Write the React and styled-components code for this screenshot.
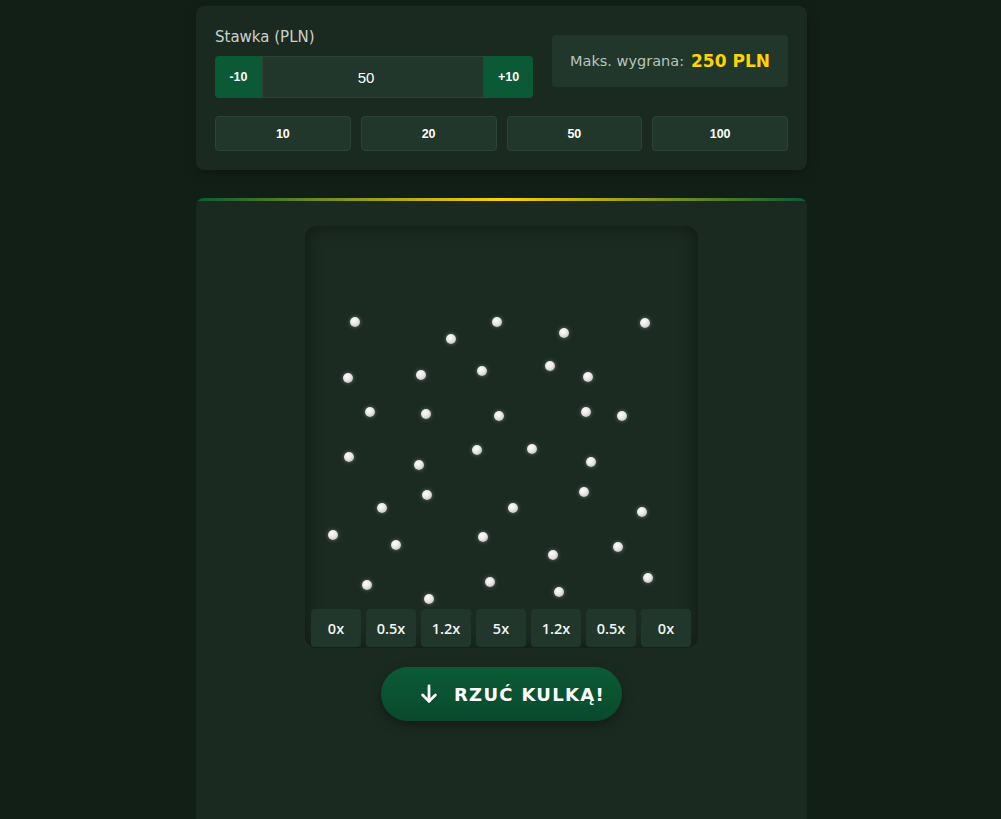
import React, { useState } from 'react';
import styled, { createGlobalStyle } from 'styled-components';

const GlobalStyle = createGlobalStyle`
  body {
    margin: 0;
    background: #121f17;
    font-family: 'DejaVu Sans', 'Open Sans', sans-serif;
    color: #fff;
  }
`;

const Page = styled.div`
  width: 611px;
  margin: 0 auto;
  padding: 6px 0 0 2px;
  display: flex;
  flex-direction: column;
  gap: 28px;
`;

const Panel = styled.section`
  background: #1b2a21;
  border-radius: 8px;
  box-shadow: 0 4px 12px rgba(0, 0, 0, 0.25);
  padding: 21px 19px 19px;
`;

const TopRow = styled.div`
  display: flex;
  align-items: flex-end;
  justify-content: space-between;
`;

const BetGroup = styled.div`
  display: flex;
  flex-direction: column;
  gap: 9px;
`;

const Label = styled.div`
  font-size: 15px;
  color: #c9d1cc;
  line-height: 20px;
`;

const Stepper = styled.div`
  display: flex;
  width: 318px;
  height: 42px;
  border-radius: 4px;
  overflow: hidden;
`;

const StepButton = styled.button`
  width: ${(p) => p.$w}px;
  border: 0;
  background: #0b5a35;
  color: #fff;
  font-family: 'Liberation Sans', Arial, sans-serif;
  font-weight: bold;
  font-size: 12.5px;
  cursor: pointer;
`;

const StakeInput = styled.input`
  flex: 1;
  min-width: 0;
  border: 1px solid #2d4536;
  background: #22372b;
  color: #fff;
  text-align: center;
  padding: 0 14px 0 0;
  font-family: 'Liberation Sans', Arial, sans-serif;
  font-size: 15px;
  outline: none;
`;

const MaxBox = styled.div`
  width: 236px;
  height: 52px;
  margin-bottom: 11px;
  border-radius: 4px;
  background: #22372b;
  display: flex;
  align-items: center;
  justify-content: center;
  gap: 7px;
  font-size: 14.5px;
  color: #b9c4bd;
`;

const MaxValue = styled.span`
  color: #ffd400;
  font-weight: bold;
  font-size: 17px;
`;

const QuickRow = styled.div`
  margin-top: 18px;
  display: grid;
  grid-template-columns: repeat(4, 1fr);
  gap: 10px;
`;

const QuickButton = styled.button`
  height: 35px;
  border: 1px solid #2d4536;
  border-radius: 4px;
  background: #22372b;
  color: #fff;
  font-family: 'Liberation Sans', Arial, sans-serif;
  font-weight: bold;
  font-size: 12.5px;
  cursor: pointer;
`;

const GamePanel = styled.section`
  position: relative;
  background: #1b2a21;
  border-radius: 8px 8px 0 0;
  min-height: 640px;
  padding-top: 28px;
  display: flex;
  flex-direction: column;
  align-items: center;
  gap: 19px;
  overflow: hidden;
  &::before {
    content: '';
    position: absolute;
    top: 0;
    left: 0;
    right: 0;
    height: 3px;
    background: linear-gradient(90deg, #0b5a35, #ffd400 50%, #0b5a35);
  }
`;

const Board = styled.div`
  position: relative;
  width: 393px;
  height: 422px;
  border-radius: 12px;
  background: #1b2b21;
  box-shadow: inset 0 0 18px rgba(0, 0, 0, 0.45);
  display: flex;
  flex-direction: column;
  justify-content: flex-end;
  padding: 0 6px 1px;
  box-sizing: border-box;
`;

const Peg = styled.div`
  position: absolute;
  width: 10px;
  height: 10px;
  margin: -5px 0 0 -5px;
  border-radius: 50%;
  background: radial-gradient(circle at 40% 35%, #ffffff, #e6e6e6 45%, #a9a9a9);
  box-shadow: 0 0 4px rgba(255, 255, 255, 0.35);
`;

const Slots = styled.div`
  display: grid;
  grid-template-columns: repeat(7, 50px);
  gap: 5px;
`;

const Slot = styled.div`
  height: 38px;
  border-radius: 4px;
  background: #22372b;
  display: flex;
  align-items: center;
  justify-content: center;
  font-family: 'Open Sans', sans-serif;
  font-size: 14.5px;
  font-weight: 600;
  color: #f2f4f3;
`;

const DropButton = styled.button`
  width: 241px;
  height: 54px;
  border: 0;
  border-radius: 27px;
  background: linear-gradient(180deg, #0b5b36, #0a4a2c);
  box-shadow: 0 4px 12px rgba(0, 0, 0, 0.35);
  color: #fff;
  font-family: 'DejaVu Sans', sans-serif;
  font-weight: bold;
  font-size: 18px;
  letter-spacing: 1.3px;
  display: flex;
  align-items: center;
  justify-content: center;
  gap: 14px;
  padding: 0 0 0 20px;
  cursor: pointer;
`;

const pegs = [
  [355, 322], [451, 339], [497, 322], [564, 333], [645, 323],
  [348, 378], [421, 375], [482, 371], [550, 366], [588, 377],
  [370, 412], [426, 414], [499, 416], [586, 412], [622, 416],
  [349, 457], [419, 465], [477, 450], [532, 449], [591, 462],
  [382, 508], [427, 495], [513, 508], [584, 492], [642, 512],
  [333, 535], [396, 545], [483, 537], [553, 555], [618, 547],
  [367, 585], [429, 599], [490, 582], [559, 592], [648, 578],
];

const multipliers = ['0x', '0.5x', '1.2x', '5x', '1.2x', '0.5x', '0x'];

export default function App() {
  const [stake, setStake] = useState(50);

  return (
    <>
      <GlobalStyle />
      <Page>
        <Panel>
          <TopRow>
            <BetGroup>
              <Label>Stawka (PLN)</Label>
              <Stepper>
                <StepButton $w={47} onClick={() => setStake(Math.max(0, stake - 10))}>
                  -10
                </StepButton>
                <StakeInput value={stake} onChange={(e) => setStake(Number(e.target.value) || 0)} />
                <StepButton $w={49} onClick={() => setStake(stake + 10)}>
                  +10
                </StepButton>
              </Stepper>
            </BetGroup>
            <MaxBox>
              Maks. wygrana: <MaxValue>{stake * 5} PLN</MaxValue>
            </MaxBox>
          </TopRow>
          <QuickRow>
            {[10, 20, 50, 100].map((v) => (
              <QuickButton key={v} onClick={() => setStake(v)}>
                {v}
              </QuickButton>
            ))}
          </QuickRow>
        </Panel>

        <GamePanel>
          <Board>
            {pegs.map(([x, y], i) => (
              <Peg key={i} style={{ left: x - 305, top: y - 226 }} />
            ))}
            <Slots>
              {multipliers.map((m, i) => (
                <Slot key={i}>{m}</Slot>
              ))}
            </Slots>
          </Board>
          <DropButton>
            <svg width="22" height="22" viewBox="0 0 24 24" fill="none" stroke="#fff" strokeWidth="3" strokeLinecap="round" strokeLinejoin="round">
              <path d="M12 3v17" />
              <path d="M5 13l7 7 7-7" />
            </svg>
            RZUĆ KULKĄ!
          </DropButton>
        </GamePanel>
      </Page>
    </>
  );
}
